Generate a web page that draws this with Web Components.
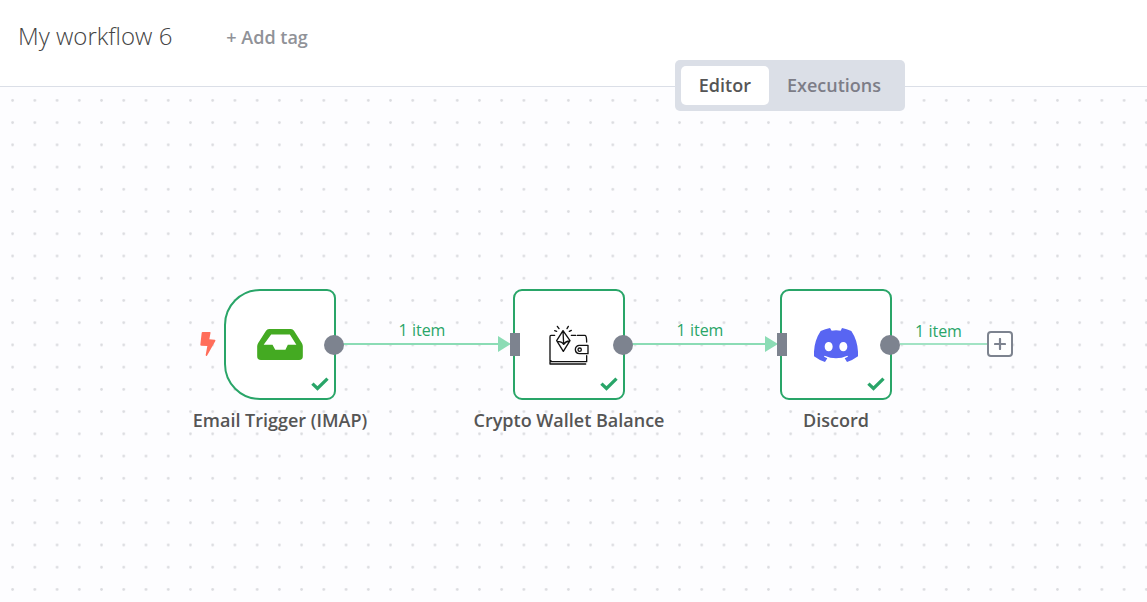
<!DOCTYPE html>
<html lang="en">
<head>
<meta charset="utf-8">
<title>My workflow 6</title>
<style>
html, body { height: 100%; margin: 0; }
body { font-family: "Open Sans", "Noto Sans", sans-serif; color: #555; background: #fff; }
</style>
</head>
<body>
<workflow-app></workflow-app>
<script>
const define = (name, html) => {
  const template = document.createElement('template');
  template.innerHTML = html;
  customElements.define(name, class extends HTMLElement {
    connectedCallback() {
      if (this.shadowRoot) return;
      this.attachShadow({ mode: 'open' }).append(template.content.cloneNode(true));
    }
  });
};

define('workflow-header', `
<style>
:host { display: flex; align-items: center; gap: 54px; height: 86px; padding: 0 18px 12px; box-sizing: border-box; background: #fff; }
h1 { margin: 0; padding-bottom: 2px; font-size: 24px; line-height: 32px; font-weight: 320; color: #444; white-space: nowrap; }
button { padding: 0; border: 0; background: none; font: 600 18px/24px "Open Sans", sans-serif; color: #909298; cursor: pointer; white-space: nowrap; }
</style>
<h1><slot></slot></h1>
<button type="button">+ Add tag</button>`);

define('view-tabs', `
<style>
:host { display: flex; padding: 6px; border-radius: 5px; background: #dbdfe7; }
button { height: 39px; padding: 0 18px 2px; border: 0; border-radius: 5px; background: none; font: 600 18px/24px "Open Sans", sans-serif; color: #7d7d87; cursor: pointer; }
button[aria-pressed=true] { background: #fff; color: #555; }
</style>
<button type="button" aria-pressed="true">Editor</button>
<button type="button" aria-pressed="false">Executions</button>`);

define('dot-grid', `
<style>
:host { display: block; }
svg { display: block; width: 100%; height: 100%; }
</style>
<svg aria-hidden="true">
  <defs><pattern id="dots" width="20" height="20" patternUnits="userSpaceOnUse" patternTransform="translate(1.5 2.3) scale(1.1115)">
    <circle cx="10" cy="10" r="1.2" fill="#dadbdf"/>
  </pattern></defs>
  <rect width="100%" height="100%" fill="url(#dots)"/>
</svg>`);

define('success-check', `
<style>:host { display: block; width: 18px; height: 14px; } svg { display: block; }</style>
<svg width="18" height="14" viewBox="0 0 18 14" aria-hidden="true"><path d="M1.4 6.6 6.5 11.5 16.5 1.6" fill="none" stroke="#29a568" stroke-width="3.3"/></svg>`);

define('workflow-node', `
<style>
:host { display: block; width: 112px; }
.box { position: relative; display: grid; place-items: center; height: 111px; box-sizing: border-box; border: 2px solid #29a568; border-radius: 9px; background: #fff; }
:host([trigger]) .box { border-radius: 36px 9px 9px 36px; }
.out { position: absolute; right: -10px; top: 44px; width: 20px; height: 20px; border-radius: 50%; background: #7d838f; }
.in { position: absolute; left: -5px; top: 42px; width: 10px; height: 23px; background: #7d838f; }
:host([trigger]) .in { display: none; }
.bolt { display: none; position: absolute; left: -26px; top: 41px; }
:host([trigger]) .bolt { display: block; }
success-check { position: absolute; right: 5px; bottom: 7px; }
.label { display: flex; justify-content: center; margin-top: 8px; font-size: 18px; line-height: 25px; font-weight: 560; color: #555; white-space: nowrap; }
</style>
<div class="box">
  <slot name="icon"></slot>
  <svg class="bolt" width="16" height="24" viewBox="0 0 46 72" aria-hidden="true"><path d="M7 0H29Q31 0 30.500 3L27 22 43 23Q46 24 45 27L20 71Q17 73 16 69L21 42 3 41Q0 41 0 38L4 3Q4 0 7 0Z" fill="#ff6d5a"/></svg>
  <span class="in"></span><span class="out"></span>
  <success-check></success-check>
</div>
<div class="label"><span><slot></slot></span></div>`);

define('inbox-icon', `
<style>:host, svg { display: block; }</style>
<svg width="46" height="31" viewBox="0 0 134 91" aria-hidden="true"><path fill="#44aa22" fill-rule="evenodd" d="M35 0H99Q105 0 108 5L131 41Q134 46 134 51V80Q134 91 123 91H11Q0 91 0 80V51Q0 46 3 41L26 5Q29 0 35 0ZM41 16 19 46H45L53 61H83L90 46H115L96 16Z"/></svg>`);

define('wallet-icon', `
<style>:host, svg { display: block; }</style>
<svg width="42" height="42" viewBox="24 25 126 126" fill="none" stroke="#111" stroke-width="4" stroke-linecap="round" stroke-linejoin="round" aria-hidden="true">
  <path d="M44 59H33Q30 59 30 63V135H33M30 138V145H137M33 138H140V120M94 59H107M112 59H135Q140 60 140 79"/>
  <path d="M69 45 90 75 70 107 50 75ZM69 45 71 86M51 77Q65 77 71 86 76 77 89 76"/>
  <path d="M144 89H117Q106 91 106 102 107 114 119 114H144Z"/><circle cx="119" cy="102" r="5"/>
  <path d="M57 39 52 32M81 39 85 32M50 47 44 45M88 47 94 44"/>
</svg>`);

define('discord-icon', `
<style>:host, svg { display: block; }</style>
<svg width="44" height="34" viewBox="0 0 132 102" aria-hidden="true"><path fill="#5865f2" fill-rule="evenodd" d="M20 9Q34 3 48 0L53 8Q66 6 80 8L84 0Q98 3 112 9 134 42 132 85 116 97 99 102L92 91 102 86 100 83Q66 98 32 83L30 86 40 91 33 102Q16 97 0 85-2 42 20 9ZM44 42C37 42 32 48 32 56S37 70 44 70 56 64 56 56 51 42 44 42ZM88 42C81 42 76 48 76 56S81 70 88 70 100 64 100 56 95 42 88 42Z"/></svg>`);

define('flow-edge', `
<style>
:host { display: block; }
.label { display: flex; justify-content: center; height: 24px; padding-right: 10px; font-size: 16px; line-height: 24px; color: #29a568; white-space: nowrap; }
.line { display: flex; align-items: center; height: 16px; margin-top: -6px; }
.bar { flex: 1; height: 2px; background: #8bdcb5; }
.arrow { width: 13px; height: 16px; background: #8bdcb5; clip-path: polygon(0 0, 100% 50%, 0 100%); }
:host([open]) .arrow { display: none; }
:host([open]) .label { line-height: 26px; }
:host([open]) .bar { background: #a2e3c4; }
</style>
<div class="label"><span><slot></slot></span></div>
<div class="line"><span class="bar"></span><span class="arrow"></span></div>`);

define('add-node', `
<style>
:host { display: block; }
button { display: grid; place-items: center; width: 26px; height: 26px; padding: 0; border: 2px solid #7d838f; border-radius: 4px; background: #fff; cursor: pointer; }
</style>
<button type="button" aria-label="Add node"><svg width="12" height="12" viewBox="0 0 12 12" aria-hidden="true"><path d="M6 1V11M1 6H11" stroke="#7d838f" stroke-width="2.200" stroke-linecap="round"/></svg></button>`);

define('workflow-canvas', `
<style>
:host { display: block; position: relative; overflow: hidden; background: #fdfdff; border-top: 1px solid #dbdfe7; }
dot-grid { height: 100%; }
workflow-node, flow-edge, add-node { position: absolute; }
workflow-node { top: 202px; }
flow-edge { top: 231px; }
#email { left: 224px; }
#wallet { left: 513px; }
#discord { left: 780px; }
#e1 { left: 343px; width: 168px; }
#e2 { left: 632px; width: 146px; }
#e3 { left: 900px; width: 87px; }
add-node { left: 987px; top: 244px; }
</style>
<dot-grid></dot-grid>
<flow-edge id="e1">1 item</flow-edge>
<flow-edge id="e2">1 item</flow-edge>
<flow-edge id="e3" open>1 item</flow-edge>
<workflow-node id="email" trigger><inbox-icon slot="icon"></inbox-icon>Email Trigger (IMAP)</workflow-node>
<workflow-node id="wallet"><wallet-icon slot="icon"></wallet-icon>Crypto Wallet Balance</workflow-node>
<workflow-node id="discord"><discord-icon slot="icon"></discord-icon>Discord</workflow-node>
<add-node></add-node>`);

define('workflow-app', `
<style>
:host { position: relative; display: flex; flex-direction: column; min-height: 100vh; }
workflow-canvas { flex: 1; display: grid; }
view-tabs { position: absolute; top: 60px; right: 242px; }
</style>
<workflow-header>My workflow 6</workflow-header>
<workflow-canvas></workflow-canvas>
<view-tabs></view-tabs>`);
</script>
</body>
</html>
